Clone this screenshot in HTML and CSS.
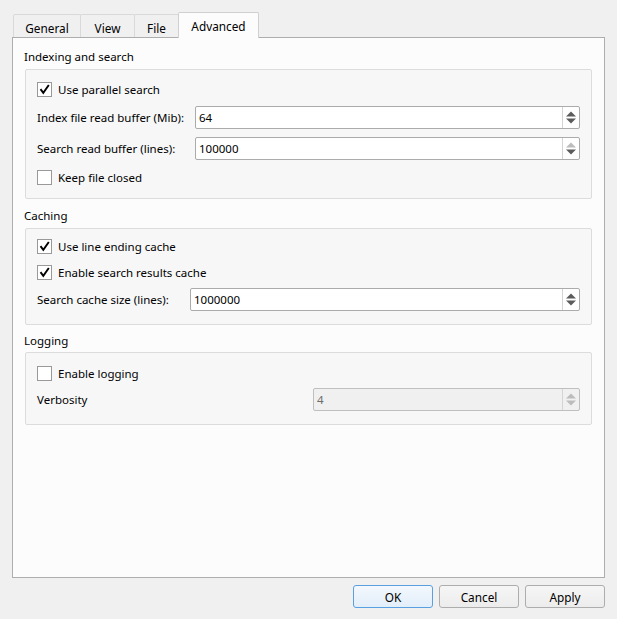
FILE: index.html
```html
<!DOCTYPE html>
<html>
<head>
<meta charset="utf-8">
<link rel="stylesheet" href="styles.css">
</head>
<body>
<div class="dialog">
  <div class="tabs">
    <div class="tab tab-general">General</div>
    <div class="tab tab-view">View</div>
    <div class="tab tab-file">File</div>
    <div class="tab tab-advanced active">Advanced</div>
  </div>
  <div class="pane">
    <div class="section-title title-indexing">Indexing and search</div>
    <div class="group group-indexing">
      <div class="check first">
        <span class="box"><svg viewBox="0 0 15 15" width="15" height="15"><path d="M3.5 7.2 L6.3 10.8 L11.8 3" fill="none" stroke="#000" stroke-width="1.9"/></svg></span>
        <span>Use parallel search</span>
      </div>
      <div class="field field-a">
        <span class="field-label label-index">Index file read buffer (Mib):</span>
        <div class="spin">
          <span class="value">64</span>
          <span class="spin-btn"><svg viewBox="0 0 16 21" width="16" height="21"><polygon points="3,9.5 8,4.5 13,9.5" fill="#5c5c5c"/><polygon points="3,11.5 13,11.5 8,16.5" fill="#5c5c5c"/></svg></span>
        </div>
      </div>
      <div class="field field-b">
        <span class="field-label label-index">Search read buffer (lines):</span>
        <div class="spin">
          <span class="value">100000</span>
          <span class="spin-btn"><svg viewBox="0 0 16 21" width="16" height="21"><polygon points="3,9.5 8,4.5 13,9.5" fill="#bcbcbc"/><polygon points="3,11.5 13,11.5 8,16.5" fill="#5c5c5c"/></svg></span>
        </div>
      </div>
      <div class="check last">
        <span class="box"></span>
        <span>Keep file closed</span>
      </div>
    </div>

    <div class="section-title title-caching">Caching</div>
    <div class="group group-caching">
      <div class="check c1">
        <span class="box"><svg viewBox="0 0 15 15" width="15" height="15"><path d="M3.5 7.2 L6.3 10.8 L11.8 3" fill="none" stroke="#000" stroke-width="1.9"/></svg></span>
        <span>Use line ending cache</span>
      </div>
      <div class="check c2">
        <span class="box"><svg viewBox="0 0 15 15" width="15" height="15"><path d="M3.5 7.2 L6.3 10.8 L11.8 3" fill="none" stroke="#000" stroke-width="1.9"/></svg></span>
        <span>Enable search results cache</span>
      </div>
      <div class="field field-c">
        <span class="field-label label-cache">Search cache size (lines):</span>
        <div class="spin">
          <span class="value">1000000</span>
          <span class="spin-btn"><svg viewBox="0 0 16 21" width="16" height="21"><polygon points="3,9.5 8,4.5 13,9.5" fill="#5c5c5c"/><polygon points="3,11.5 13,11.5 8,16.5" fill="#5c5c5c"/></svg></span>
        </div>
      </div>
    </div>

    <div class="section-title title-logging">Logging</div>
    <div class="group group-logging">
      <div class="check l1">
        <span class="box"></span>
        <span>Enable logging</span>
      </div>
      <div class="field field-d">
        <span class="field-label label-verbosity">Verbosity</span>
        <div class="spin disabled">
          <span class="value">4</span>
          <span class="spin-btn"><svg viewBox="0 0 16 21" width="16" height="21"><polygon points="3,9.5 8,4.5 13,9.5" fill="#bcbcbc"/><polygon points="3,11.5 13,11.5 8,16.5" fill="#bcbcbc"/></svg></span>
        </div>
      </div>
    </div>
  </div>
  <div class="buttons">
    <button class="btn default">OK</button>
    <button class="btn">Cancel</button>
    <button class="btn">Apply</button>
  </div>
</div>
</body>
</html>
```
FILE: styles.css
```css
html, body {
  margin: 0;
  padding: 0;
  background: #f0f0f0;
}
body {
  font-family: "Noto Sans", "Open Sans", sans-serif;
  font-size: 11.5px;
  color: #000;
}
.dialog {
  padding: 12px 12px 0 12px;
}
.tabs {
  display: flex;
  align-items: flex-end;
  height: 26px;
  padding-left: 1px;
  margin-bottom: -1px;
  position: relative;
  z-index: 1;
}
.tab {
  box-sizing: border-box;
  height: 23px;
  margin-bottom: 1px;
  margin-left: -1px;
  border: 1px solid #d9d9d9;
  border-bottom: none;
  border-radius: 2px 2px 0 0;
  background: #f0f0f0;
  text-align: center;
  line-height: 16px;
  padding-top: 5px;
  font-size: 11.8px;
}
.tab-general { width: 68px; margin-left: 0; }
.tab-view { width: 55px; }
.tab-file { width: 45px; }
.tab-advanced { width: 81px; }
.tab.active {
  height: 26px;
  margin-bottom: 0;
  background: #fcfcfc;
  border-color: #d0d0d0;
  padding-top: 5px;
}
.pane {
  box-sizing: border-box;
  height: 541px;
  border: 1px solid #adadad;
  background: #fcfcfc;
  padding: 11px 12px 0 11px;
}
.section-title {
  line-height: 16px;
}
.title-indexing { margin-bottom: 4px; }
.title-caching { margin-top: 9px; margin-bottom: 4px; }
.title-logging { margin-top: 8px; margin-bottom: 3px; }
.group {
  margin-left: 1px;
  border: 1px solid #dcdcdc;
  border-radius: 2px;
  background: #f7f7f7;
  padding: 0 11px;
}
.check {
  display: flex;
  align-items: center;
  height: 15px;
  line-height: 16px;
}
.box {
  box-sizing: border-box;
  width: 15px;
  height: 15px;
  border: 1px solid #999;
  background: #fff;
  margin-right: 6px;
  position: relative;
  flex: none;
}
.box svg {
  position: absolute;
  left: -1px;
  top: -1px;
}
.field {
  display: flex;
  align-items: center;
  height: 23px;
}
.field-label {
  flex: none;
}
.label-index { width: 158px; }
.label-cache { width: 153px; }
.label-verbosity { width: 276px; }
.spin {
  flex: 1;
  box-sizing: border-box;
  height: 23px;
  border: 1px solid #ababab;
  border-radius: 2px;
  background: #fff;
  display: flex;
  align-items: stretch;
}
.spin .value {
  flex: 1;
  padding-left: 3px;
  line-height: 21px;
}
.spin-btn {
  width: 16px;
  border-left: 1px solid #d4d4d4;
  display: flex;
  align-items: center;
}
.spin.disabled {
  background: #f0f0f0;
  border-color: #bfbfbf;
}
.spin.disabled .value {
  color: #6d6d6d;
}

/* vertical rhythm */
.group-indexing .first { margin-top: 12px; }
.group-indexing .field-a { margin-top: 9px; }
.group-indexing .field-b { margin-top: 8px; }
.group-indexing .last { margin-top: 10px; margin-bottom: 13px; }

.group-caching .c1 { margin-top: 10px; }
.group-caching .c2 { margin-top: 11px; }
.group-caching .field-c { margin-top: 8px; margin-bottom: 13px; }

.group-logging .l1 { margin-top: 13px; }
.group-logging .field-d { margin-top: 7px; margin-bottom: 13px; }

.buttons {
  display: flex;
  justify-content: flex-end;
  gap: 6px;
  margin-top: 7px;
}
.btn {
  box-sizing: border-box;
  width: 80px;
  height: 23px;
  border: 1px solid #adadad;
  border-radius: 3px;
  background: linear-gradient(#f6f6f6, #ececec);
  font-family: "Noto Sans", "Open Sans", sans-serif;
  font-size: 11.8px;
  color: #000;
  padding: 0;
}
.btn.default {
  border-color: #5aa0e0;
  background: linear-gradient(#f3f8fd, #e2eefa);
}
```
